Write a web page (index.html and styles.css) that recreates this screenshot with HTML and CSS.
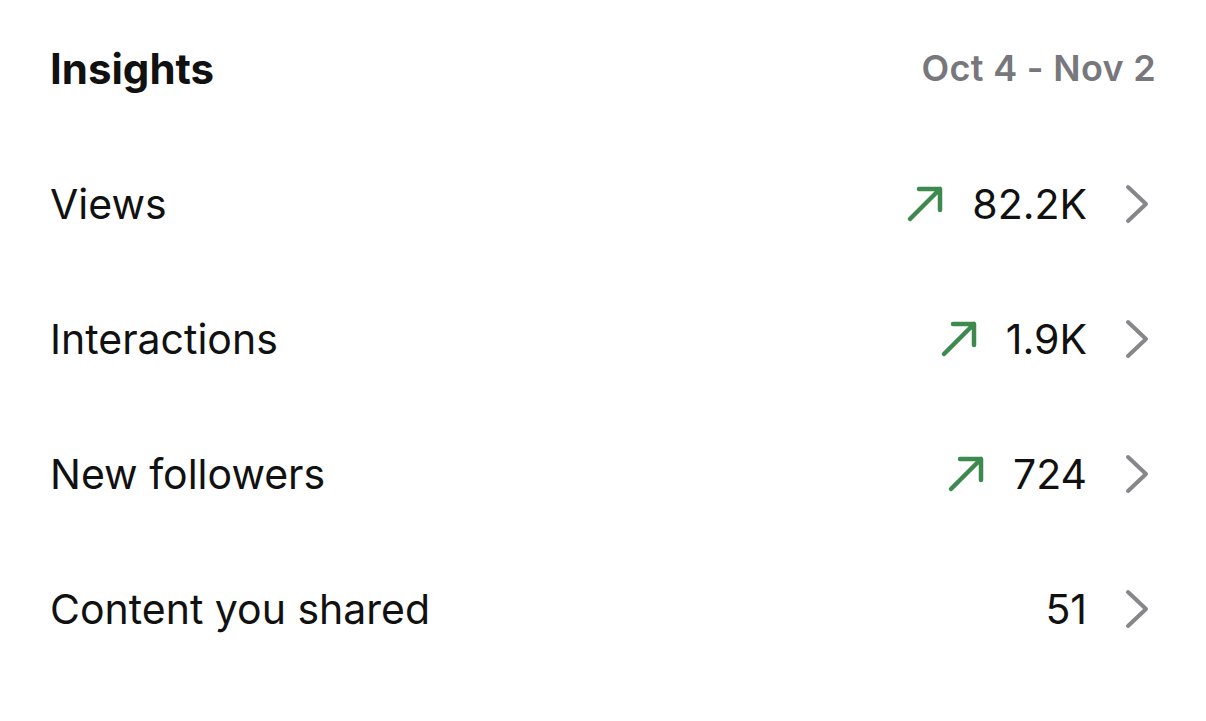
FILE: index.html
```html
<!DOCTYPE html>
<html>
<head>
<meta charset="utf-8">
<link rel="stylesheet" href="styles.css">
</head>
<body>
<div class="card">
  <div class="header">
    <h1 class="title">Insights</h1>
    <span class="range">Oct 4 - Nov 2</span>
  </div>
  <div class="row">
    <span class="label">Views</span>
    <div class="meta">
      <svg class="up" viewBox="0 0 40 40"><path d="M5 35 L35 5 M14 5 H35 V26"/></svg>
      <span class="value">82.2K</span>
      <svg class="chev" viewBox="0 0 30 42"><path d="M6 4 L24 21 L6 38"/></svg>
    </div>
  </div>
  <div class="row">
    <span class="label">Interactions</span>
    <div class="meta">
      <svg class="up" viewBox="0 0 40 40"><path d="M5 35 L35 5 M14 5 H35 V26"/></svg>
      <span class="value">1.9K</span>
      <svg class="chev" viewBox="0 0 30 42"><path d="M6 4 L24 21 L6 38"/></svg>
    </div>
  </div>
  <div class="row">
    <span class="label">New followers</span>
    <div class="meta">
      <svg class="up" viewBox="0 0 40 40"><path d="M5 35 L35 5 M14 5 H35 V26"/></svg>
      <span class="value">724</span>
      <svg class="chev" viewBox="0 0 30 42"><path d="M6 4 L24 21 L6 38"/></svg>
    </div>
  </div>
  <div class="row">
    <span class="label">Content you shared</span>
    <div class="meta">
      <span class="value">51</span>
      <svg class="chev" viewBox="0 0 30 42"><path d="M6 4 L24 21 L6 38"/></svg>
    </div>
  </div>
</div>
</body>
</html>
```
FILE: styles.css
```css
html, body {
  margin: 0;
  padding: 0;
  background: #ffffff;
}
body {
  font-family: Inter, "Noto Sans", "Liberation Sans", sans-serif;
  color: #111111;
}
.card {
  padding: 0 50px;
  display: flex;
  flex-direction: column;
}
.header {
  height: 136px;
  display: flex;
  align-items: center;
  justify-content: space-between;
}
.title {
  margin: 0;
  font-size: 42px;
  font-weight: 700;
  letter-spacing: 0;
}
.range {
  font-size: 36px;
  font-weight: 600;
  color: #77777c;
  letter-spacing: 0.3px;
}
.row {
  height: 135px;
  display: flex;
  align-items: center;
  justify-content: space-between;
}
.label {
  font-size: 41px;
  font-weight: 400;
}
.meta {
  display: flex;
  align-items: center;
}
.up {
  width: 40px;
  height: 40px;
  margin-right: 27px;
  fill: none;
  stroke: #3e8a4e;
  stroke-width: 4.5;
  stroke-linecap: round;
  stroke-linejoin: round;
}
.value {
  font-size: 41px;
  font-weight: 400;
}
.chev {
  width: 30px;
  height: 42px;
  margin-left: 35px;
  margin-right: 4px;
  fill: none;
  stroke: #86868b;
  stroke-width: 4;
  stroke-linecap: round;
  stroke-linejoin: round;
}
```
